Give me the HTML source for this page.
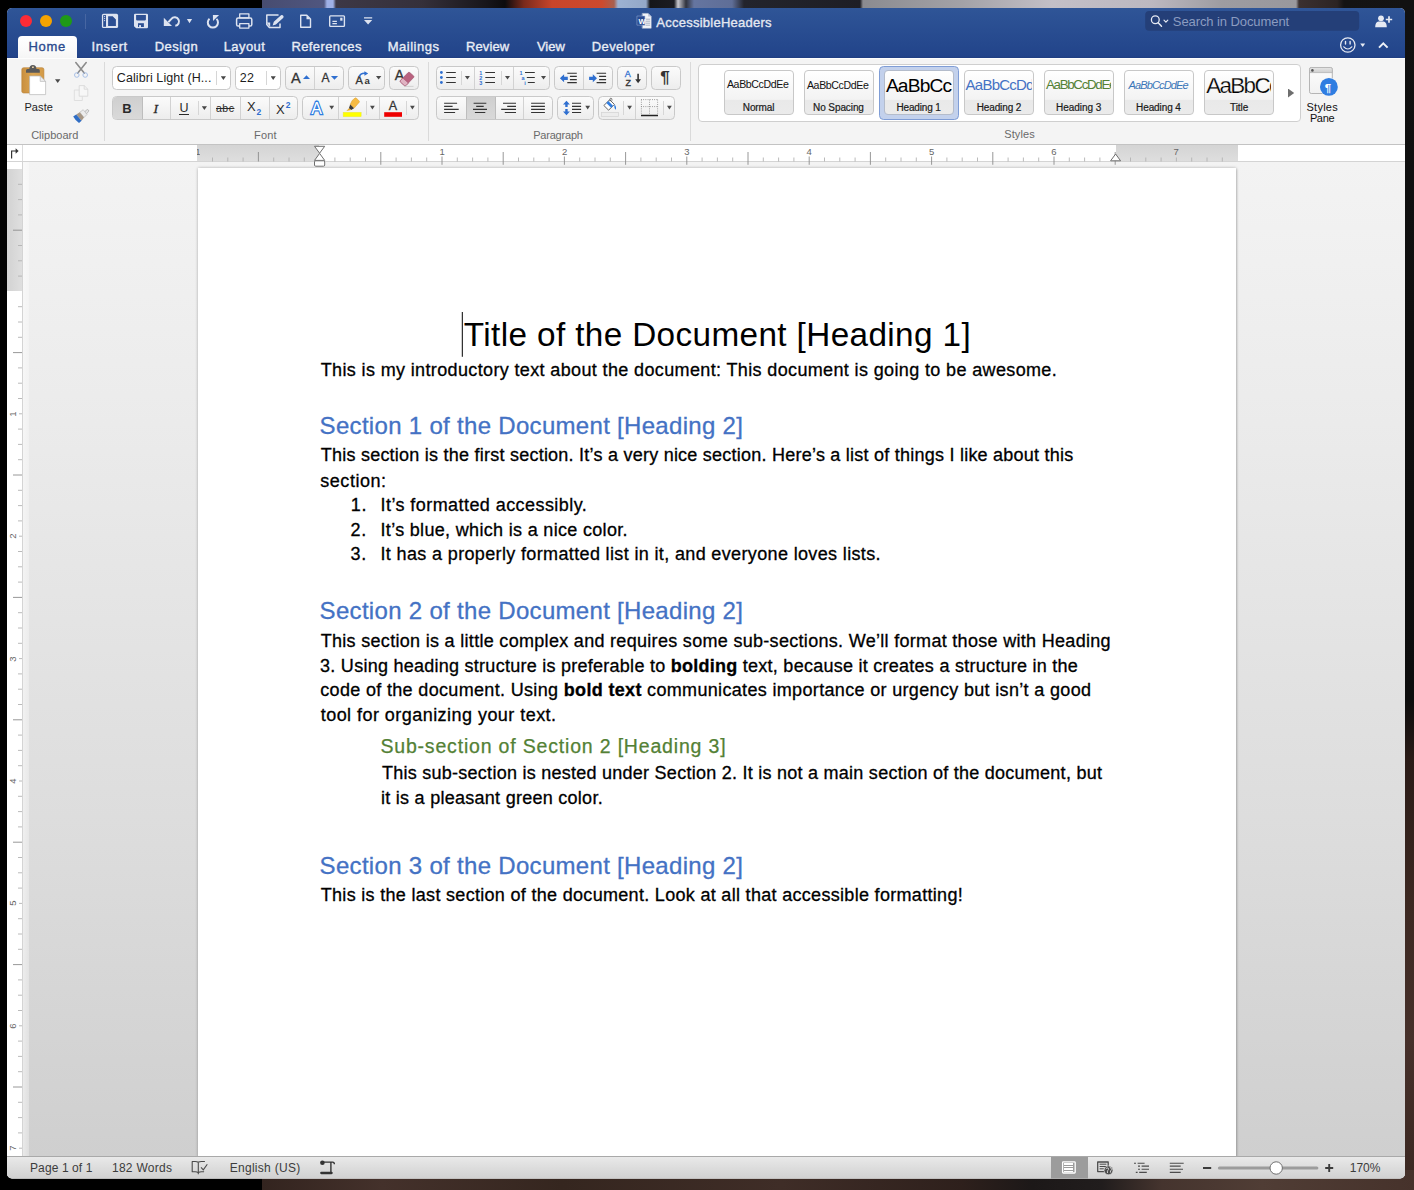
<!DOCTYPE html>
<html lang="en">
<head>
<meta charset="utf-8">
<title>AccessibleHeaders</title>
<style>
*{box-sizing:border-box;margin:0;padding:0}
html,body{width:1414px;height:1190px;overflow:hidden;background:#000}
body{position:relative;font-family:"Liberation Sans",sans-serif;color:#222}
.a{position:absolute}
.f{position:absolute;white-space:nowrap;line-height:1;display:block}
svg{position:absolute;overflow:visible}
#win{left:0;top:0;width:1414px;height:1190px;clip-path:inset(8px 9px 11.5px 7px round 5px);background:#f4f4f4}
#tb{left:0;top:8px;width:1414px;height:50px;background:linear-gradient(#2f5597,#22448a 96%,#1f3d7f)}
.tab{color:#e9edf5;font-size:13px;-webkit-text-stroke:0.35px #e9edf5}
.ui{font-size:11px;color:#1e1e1e}
.grp{font-size:11px;color:#6a6a6a}
.btn{position:absolute;border:1px solid #c9c9c9;border-radius:4.5px;background:linear-gradient(#fbfbfb,#ededed);overflow:hidden}
.btn i{position:absolute;top:0;bottom:0;width:1px;background:#d2d2d2}
.btn i.s{top:4px;bottom:4px;background:#d6d6d6}
.btn b.p{position:absolute;top:0;bottom:0;background:linear-gradient(#cfcfcf,#d9d9d9);border-left:1px solid #bdbdbd;border-right:1px solid #bdbdbd}
.sep{position:absolute;top:62px;height:79px;width:1px;background:#dadada}
.dd{position:absolute;width:5.200px;height:3.800px;background:#464646;clip-path:polygon(0 0,100% 0,50% 100%)}
.tile{position:absolute;top:69.5px;width:69.5px;height:45px;border:1px solid #c8c8c8;border-radius:4px;background:linear-gradient(#fff,#f3f3f3 66%,#e9e9e9 68%,#ebebeb);overflow:hidden}
.tile .f{font-size:10px;color:#222}
.doc{color:#000}
</style>
</head>
<body>
<!-- desktop wallpaper slivers -->
<div class="a" style="left:262px;top:0;width:1152px;height:12px;background:linear-gradient(90deg,#474c70 0,#50567f 62px,#9fb0e6 65px,#9fb0e6 71px,#3d3846 74px,#35303a 160px,#17151a 225px,#0c0b0d 243px,#7a2a1c 262px,#c8452b 290px,#cc4a2e 340px,#a8604f 352px,#9db2d2 356px,#93a8c8 384px,#15161a 388px,#1b1c22 412px,#c9c9cf 416px,#30333d 424px,#6575a0 432px,#5f6e97 470px,#23242c 482px,#1e1e25 598px,#8b8b90 601px,#a3a2a7 700px,#c3bfc7 790px,#bcb8c0 890px,#9d9ca1 960px,#99989d 1034px,#3b3030 1037px,#2c2424 1075px,#141313 1082px,#151414 1152px)"></div>
<div class="a" style="left:1400px;top:0;width:14px;height:1190px;background:linear-gradient(#111 0,#0d0d0d 700px,#2a1b17 760px,#3c2821 900px,#46302a 1040px,#3a2721 1190px)"></div>
<div class="a" style="left:262px;top:1170px;width:1152px;height:20px;background:linear-gradient(90deg,#33241f 0,#44312b 120px,#35261f 300px,#3f2d27 520px,#2e201c 700px,#1c1818 770px,#211d1d 840px,#45342e 900px,#503d35 1000px,#46322b 1152px)"></div>
<div id="win" class="a">
<div id="tb" class="a"></div>
<!-- traffic lights -->
<div class="a" style="left:20.2px;top:15.2px;width:12px;height:12px;border-radius:50%;background:#fc2b36"></div>
<div class="a" style="left:40.1px;top:15.2px;width:12px;height:12px;border-radius:50%;background:#f5a300"></div>
<div class="a" style="left:60.1px;top:15.2px;width:12px;height:12px;border-radius:50%;background:#1f9a17"></div>
<div class="a" style="left:85px;top:14px;width:1px;height:15px;background:#4766a2"></div>
<!-- quick access toolbar + title-bar icons -->
<svg class="a" style="left:0;top:0" width="1414" height="60" viewBox="0 0 1414 60" fill="none" stroke="#dde3f0" stroke-width="1.4" stroke-linejoin="round" stroke-linecap="round">
 <!-- sidebar/doc -->
 <rect x="101.900" y="13.800" width="16.200" height="14.200" rx="1.600" fill="#dde3f0" stroke="none"/>
 <rect x="103.200" y="15.100" width="2.800" height="11.700" fill="#2c4f93" stroke="none"/>
 <path d="M108.100 16.200h4.500l3.300 3.300v6.400h-7.800z" fill="#2c4f93" stroke="none"/>
 <path d="M112.400 16.400v3.300h3.300" stroke="#2c4f93" stroke-width=".1"/>
 <path d="M112.900 17.200v2.100h2.100z" fill="#2c4f93" stroke="none"/>
 <g fill="#dde3f0" stroke="none"><circle cx="104.600" cy="16.600" r=".65"/><circle cx="104.600" cy="18.600" r=".65"/><circle cx="104.600" cy="20.600" r=".65"/></g>
 <!-- save -->
 <path d="M135.200 13.800h11.600q1.200 0 1.200 1.200v12q0 1.200-1.200 1.200h-10.600l-2.200-2v-11.200q0-1.200 1.200-1.200z" fill="#dde3f0" stroke="none"/>
 <path d="M136.100 15.100h9.800v4.500q0 .8-.8 .8h-8.200q-.8 0-.8-.8z" fill="#2c4f93" stroke="none"/>
 <rect x="138" y="23.200" width="5.900" height="3.800" fill="#2c4f93" stroke="none"/>
 <rect x="139.100" y="25.100" width="1.900" height="1.900" fill="#dde3f0" stroke="none"/>
 <!-- undo -->
 <path d="M163.800 17.800v8.300h8.200z" fill="#dde3f0" stroke="none"/>
 <path d="M168.400 22.200L171.400 18.800A4.300 4.300 0 1 1 175.300 25.800" stroke-width="2" stroke-linecap="butt" stroke-linejoin="round"/>
 <path d="M186.900 19.100h5.200l-2.600 4.100z" fill="#dde3f0" stroke="none"/>
 <!-- redo/repeat -->
 <path d="M209.500 18.700A5.100 5.100 0 1 0 216.500 18.900" stroke-width="2" stroke-linecap="butt"/>
 <path d="M212.900 15h6.200l-6.100 6z" fill="#dde3f0" stroke="none"/>
 <!-- print -->
 <rect x="239.700" y="13.800" width="9.200" height="4" stroke-width="1.300"/>
 <rect x="236.600" y="17.900" width="15.200" height="8.200" rx="1.600" stroke-width="1.500"/>
 <rect x="239.700" y="23.600" width="9.200" height="4.500" fill="#2c4f93" stroke-width="1.300"/>
 <!-- edit -->
 <path d="M278 15.100h-11.200v9.400l2.600 3h10.600v-3.400" stroke-width="1.500"/>
 <path d="M266.800 22.500h3.400v4.800z" fill="#dde3f0" stroke="none"/>
 <path d="M272.600 25.600l1.200-3.800l7.200-6.600q1.700-.5 2.400 .9q.6 1.100-.3 2l-7.200 6.500z" fill="#dde3f0" stroke="none"/>
 <!-- new doc -->
 <path d="M300.700 15.300h6.100l3.700 3.700v8.300h-9.800z" stroke-width="1.400"/>
 <path d="M306.500 15.300v4h4z" fill="#dde3f0" stroke="none"/>
 <!-- card -->
 <rect x="329.700" y="15.900" width="14.700" height="10.500" rx=".8" stroke-width="1.400"/>
 <rect x="340.200" y="17.700" width="2.300" height="3" fill="#dde3f0" stroke="none"/>
 <path d="M332.400 21.400h4.500M332.400 23.600h4.500" stroke-width="1.100" stroke-linecap="butt"/>
 <!-- customize -->
 <path d="M364 17.800h8.200" stroke-width="1.300" stroke-linecap="butt"/>
 <path d="M364 20h8.200l-4.100 4.500z" fill="#dde3f0" stroke="none"/>
 <!-- word doc icon -->
 <path d="M642.500 13.400h5.700l3 3v11.800h-8.700z" fill="#f2f4f8" stroke="#c9d0de" stroke-width=".5"/>
 <path d="M648.200 13.400v3h3z" fill="#b9c2d6" stroke="none"/>
 <path d="M645.500 19.200h4.600M645.500 21.200h4.600M645.500 23.200h4.600M645.500 25.200h4.600" stroke="#8d97ad" stroke-width=".7" stroke-linecap="butt"/>
 <rect x="637.300" y="16" width="7.600" height="9.200" fill="#2a4c92" stroke="#9db0d8" stroke-width=".5"/>
 <!-- search box -->
 <rect x="1145.200" y="11" width="214" height="19.800" rx="4" fill="#243f78" stroke="none"/>
 <circle cx="1155.300" cy="19.800" r="3.900" stroke="#e6eaf3" stroke-width="1.300"/>
 <path d="M1158.200 22.800l3.300 3.400" stroke="#e6eaf3" stroke-width="1.500"/>
 <path d="M1164 20.200l1.900 1.900l1.900-1.900" stroke="#e6eaf3" stroke-width="1.200"/>
 <!-- share (person +) -->
 <circle cx="1381" cy="18.300" r="2.900" fill="#e6eaf3" stroke="none"/>
 <path d="M1375.200 27.300q0-5 3.300-5.700h5q3.300 .7 3.300 5.700z" fill="#e6eaf3" stroke="none"/>
 <path d="M1389 16.300v6.400M1385.800 19.500h6.400" stroke="#e6eaf3" stroke-width="1.700" stroke-linecap="butt"/>
 <!-- smiley -->
 <circle cx="1347.800" cy="45" r="7.200" stroke="#e6eaf3" stroke-width="1.300"/>
 <path d="M1343.800 46.800q4 4.400 8 0" stroke="#e6eaf3" stroke-width="1.200"/>
 <path d="M1345.500 41.500v2.600M1350.100 41.500v2.600" stroke="#e6eaf3" stroke-width="1.400"/>
 <path d="M1360.200 43.400h5l-2.500 3.600z" fill="#e6eaf3" stroke="none"/>
 <path d="M1379 47.600l4.300-4.300l4.300 4.300" stroke="#eef1f7" stroke-width="2" stroke-linejoin="miter" stroke-linecap="butt"/>
</svg>
<span class="f" style="left:638.38px;top:18.00px;letter-spacing:-1.294px;font-size:7.500px;font-weight:bold;color:#fff;">W</span>
<span class="f tab" style="left:656.30px;top:15.80px;letter-spacing:0.253px;color:#e4e8f1;-webkit-text-stroke:0.35px #e4e8f1;">AccessibleHeaders</span>
<span class="f" style="left:1172.84px;top:15.20px;letter-spacing:-0.087px;font-size:13px;color:#8b9cc0;">Search in Document</span>
<!-- ribbon tabs -->
<div class="a" style="left:18px;top:36px;width:59px;height:24px;border-radius:4px 4px 0 0;background:linear-gradient(#fff,#fafafa 60%,#f4f4f4)"></div>
<span class="f tab" style="left:28.44px;top:39.80px;letter-spacing:0.746px;color:#2b4a8e;-webkit-text-stroke:0.35px #2b4a8e;">Home</span>
<span class="f tab" style="left:91.44px;top:39.80px;letter-spacing:0.654px;">Insert</span>
<span class="f tab" style="left:154.75px;top:39.80px;letter-spacing:0.481px;">Design</span>
<span class="f tab" style="left:223.67px;top:39.80px;letter-spacing:0.427px;">Layout</span>
<span class="f tab" style="left:291.41px;top:39.80px;letter-spacing:0.395px;">References</span>
<span class="f tab" style="left:387.77px;top:39.80px;letter-spacing:0.497px;">Mailings</span>
<span class="f tab" style="left:465.94px;top:39.80px;letter-spacing:0.125px;">Review</span>
<span class="f tab" style="left:536.91px;top:39.80px;letter-spacing:-0.018px;">View</span>
<span class="f tab" style="left:591.76px;top:39.80px;letter-spacing:0.404px;">Developer</span>
<div class="a" style="left:0;top:58px;width:1414px;height:1px;background:#fdfdfd"></div>
<!-- ===== ribbon ===== -->
<div class="a" style="left:0;top:144px;width:1414px;height:1px;background:#c3c3c3"></div>
<div class="sep" style="left:103.500px"></div>
<div class="sep" style="left:427.500px"></div>
<div class="sep" style="left:689.800px"></div>
<!-- clipboard -->
<svg class="a" style="left:0;top:58px" width="110" height="86" viewBox="0 58 110 86">
 <defs><linearGradient id="gcb" x1="0" y1="0" x2="1" y2="0"><stop offset="0" stop-color="#c98f3f"/><stop offset=".5" stop-color="#dba551"/><stop offset="1" stop-color="#d39a47"/></linearGradient></defs>
 <rect x="21.800" y="67.700" width="22.100" height="25.300" rx="1.800" fill="url(#gcb)" stroke="#b98236" stroke-width=".6"/>
 <path d="M26 72.800v-2.200q0-1.500 1.500-1.500h1.800q.2-4.100 3.600-4.100t3.600 4.100h1.800q1.500 0 1.500 1.500v2.200z" fill="#595959"/>
 <rect x="32" y="66.500" width="1.800" height="1.500" fill="#e6cfa6"/>
 <path d="M29.600 76h10.600l5.400 5.400v13.200h-16z" fill="#fff" stroke="#b9b9b9" stroke-width=".7"/>
 <path d="M40.200 76v5.400h5.400z" fill="#eee" stroke="#b9b9b9" stroke-width=".7" stroke-linejoin="round"/>
 <path d="M55 79.200h5.400l-2.700 3.800z" fill="#4a4a4a"/>
 <!-- scissors -->
 <path d="M75.800 62.600L84.400 73.200M86.200 62.600L77.600 73.200" stroke="#8c8c8c" stroke-width="1.600" fill="none" stroke-linecap="round"/>
 <circle cx="76.800" cy="75" r="2.300" fill="none" stroke="#a9c1e8" stroke-width="1"/>
 <circle cx="85.200" cy="75" r="2.300" fill="none" stroke="#a9c1e8" stroke-width="1"/>
 <!-- copy (disabled) -->
 <path d="M79.200 85.600h5l3.600 3.600v7h-8.600z" fill="#f7f7f7" stroke="#d9d9d9" stroke-width=".9"/>
 <path d="M84.200 85.600v3.600h3.600" fill="none" stroke="#d9d9d9" stroke-width=".9"/>
 <path d="M79.200 90h-4.900v10.500h8v-4.300" fill="none" stroke="#dcdcdc" stroke-width=".9"/>
 <!-- format painter -->
 <path d="M84.200 112.500l2.300-2.600q1.100-.8 1.900 .1q.7 .9-.1 1.800l-2.300 2.500z" fill="#e3e3e3" stroke="#9c9c9c" stroke-width=".6"/>
 <path d="M79.800 112.300l3.400-2.600l3.800 4.800l-3 3z" fill="#ececec" stroke="#a8a8a8" stroke-width=".5"/>
 <path d="M76.200 114.600l3.600-2.300l4.200 5.200l-2.400 3.200z" fill="#a89886"/>
 <path d="M73.200 116.500l3-1.900l5.400 6.100l-2.600 2.300q-3.500-2.300-5.800-6.500z" fill="#2f6dc4"/>
</svg>
<span class="f ui" style="left:24.43px;top:101.90px;letter-spacing:0.110px;">Paste</span>
<span class="f grp" style="left:31.18px;top:129.50px;letter-spacing:0.006px;">Clipboard</span>
<span class="f grp" style="left:254.11px;top:129.50px;letter-spacing:0.137px;">Font</span>
<span class="f grp" style="left:533.15px;top:129.50px;letter-spacing:-0.191px;">Paragraph</span>
<span class="f grp" style="left:1004.21px;top:129.40px;letter-spacing:0.101px;">Styles</span>
<!-- font row 1 -->
<div class="btn" style="left:112.100px;top:66.400px;width:118.500px;height:23.300px;background:#fff"><i class="s" style="left:103.200px"></i></div>
<div class="btn" style="left:235.100px;top:66.400px;width:45.600px;height:23.300px;background:#fff"><i class="s" style="left:30.100px"></i></div>
<span class="f" style="left:116.83px;top:71.90px;letter-spacing:0.080px;font-size:12.5px;color:#1c1c1c;">Calibri Light (H...</span>
<span class="f" style="left:239.76px;top:71.90px;letter-spacing:0.310px;font-size:12.5px;color:#1c1c1c;">22</span>
<div class="dd" style="left:220.800px;top:76.200px"></div>
<div class="dd" style="left:270.600px;top:76.200px"></div>
<div class="btn" style="left:285.100px;top:66.400px;width:58.800px;height:23.300px"><i style="left:28.200px"></i></div>
<div class="btn" style="left:348.200px;top:66.400px;width:36.500px;height:23.300px"></div>
<div class="btn" style="left:389px;top:66.400px;width:29.800px;height:23.300px"></div>
<!-- font row 2 -->
<div class="btn" style="left:112.100px;top:96.400px;width:185.500px;height:23.300px"><b class="p" style="left:-1px;width:31px;border-left:0"></b><i style="left:57.400px"></i><i class="s" style="left:85.300px"></i><i style="left:97.300px"></i><i style="left:126.600px"></i><i style="left:155.600px"></i></div>
<div class="btn" style="left:302.300px;top:96.400px;width:116.500px;height:23.300px"><i style="left:34.800px"></i><i class="s" style="left:63.200px"></i><i style="left:75.400px"></i><i class="s" style="left:102.900px"></i></div>
<!-- paragraph row 1 -->
<div class="btn" style="left:436.100px;top:66.400px;width:113.500px;height:23.300px"><i class="s" style="left:24.300px"></i><i style="left:36.500px"></i><i class="s" style="left:64.100px"></i><i style="left:76.200px"></i></div>
<div class="btn" style="left:554.200px;top:66.400px;width:58.500px;height:23.300px"><i style="left:28.200px"></i></div>
<div class="btn" style="left:617.100px;top:66.400px;width:29.700px;height:23.300px"></div>
<div class="btn" style="left:651.100px;top:66.400px;width:29.700px;height:23.300px"></div>
<!-- paragraph row 2 -->
<div class="btn" style="left:436.100px;top:96.400px;width:116.500px;height:23.300px"><b class="p" style="left:28.500px;width:30.200px"></b><i style="left:86.300px"></i></div>
<div class="btn" style="left:557.200px;top:96.400px;width:36.400px;height:23.300px"></div>
<div class="btn" style="left:598.300px;top:96.400px;width:77.200px;height:23.300px"><i class="s" style="left:24.200px"></i><i style="left:36.200px"></i><i class="s" style="left:64px"></i></div>
<!-- font / paragraph glyph icons -->
<span class="f" style="left:122.26px;top:101.60px;letter-spacing:-0.891px;font-size:13px;font-weight:bold;color:#2a2a2a;">B</span>
<span class="f" style="left:153.56px;top:101.60px;letter-spacing:2.300px;font-size:13.5px;font-style:italic;font-family:'Liberation Serif',serif;color:#2a2a2a;-webkit-text-stroke:.3px #2a2a2a;">I</span>
<span class="f" style="left:179.38px;top:102.30px;letter-spacing:-0.431px;font-size:12.5px;color:#2a2a2a;">U</span>
<div class="a" style="left:179.200px;top:114px;width:9.600px;height:1.100px;background:#2a2a2a"></div>
<div class="dd" style="left:201.800px;top:106.200px"></div>
<span class="f" style="left:216.00px;top:103.30px;letter-spacing:0.499px;font-size:10.500px;color:#2a2a2a;text-decoration:line-through;">abc</span>
<span class="f" style="left:247.04px;top:100.30px;letter-spacing:-0.172px;font-size:13px;color:#2a2a2a;">X</span>
<span class="f" style="left:256.62px;top:107.60px;letter-spacing:-0.234px;font-size:8.500px;font-weight:bold;color:#2f6fd0;">2</span>
<span class="f" style="left:276.04px;top:102.60px;letter-spacing:-0.172px;font-size:13px;color:#2a2a2a;">X</span>
<span class="f" style="left:285.63px;top:101.30px;letter-spacing:-0.234px;font-size:8.500px;font-weight:bold;color:#2f6fd0;">2</span>
<span class="f" style="left:290.99px;top:70.80px;letter-spacing:0.928px;font-size:14.500px;color:#333;-webkit-text-stroke:.3px #333;">A</span>
<span class="f" style="left:321.48px;top:72.00px;letter-spacing:0.684px;font-size:12px;color:#333;-webkit-text-stroke:.3px #333;">A</span>
<span class="f" style="left:355.45px;top:74.90px;letter-spacing:1.856px;font-size:11px;color:#333;-webkit-text-stroke:.3px #333;">A</span>
<span class="f" style="left:364.60px;top:75.90px;letter-spacing:0.003px;font-size:9.500px;font-weight:bold;color:#333;">a</span>
<span class="f" style="left:394.69px;top:67.60px;letter-spacing:0.256px;font-size:14px;color:#333;-webkit-text-stroke:.3px #333;">A</span>
<span class="f" style="left:311.36px;top:100.60px;letter-spacing:1.528px;font-size:16px;color:#fff;-webkit-text-stroke:2.400px #2f7de1;paint-order:stroke fill;">A</span>
<span class="f" style="left:388.82px;top:99.90px;letter-spacing:2.256px;font-size:12.500px;color:#333;-webkit-text-stroke:.3px #333;">A</span>
<span class="f" style="left:624.73px;top:69.80px;letter-spacing:-0.216px;font-size:9px;color:#2f6fd0;-webkit-text-stroke:.3px #2f6fd0;">A</span>
<span class="f" style="left:625.38px;top:78.80px;letter-spacing:-0.500px;font-size:9px;color:#333;-webkit-text-stroke:.3px #333;">Z</span>
<span class="f" style="left:660.16px;top:68.50px;letter-spacing:1.831px;font-size:17px;color:#333;font-weight:bold;">¶</span>
<svg class="a" style="left:0;top:58px" width="700" height="70" viewBox="0 58 700 70" fill="none">
 <!-- grow/shrink -->
 <path d="M303 79.100h7l-3.500-3.900z" fill="#2f6fd0"/>
 <path d="M330.900 75.900h7.200l-3.600 3.900z" fill="#2f6fd0"/>
 <!-- change case arrow -->
 <path d="M359.200 76.800q1.200-4 6-3.600" stroke="#2f6fd0" stroke-width="1.500"/>
 <path d="M364.400 71.200l3.800 2.300l-3.800 2.300z" fill="#2f6fd0"/>
 <path d="M376 75.900h5.300l-2.650 3.700z" fill="#4a4a4a"/>
 <!-- eraser -->
 <path d="M400.500 80.400l7.600-7.800q.8-.7 1.700 0l3.800 3.300q.7 .8 0 1.600l-7.600 8q-.8 .8-1.700 0l-3.800-3.400q-.7-.8 0-1.700z" fill="#b9627f" stroke="#9c4f6a" stroke-width=".6"/>
 <path d="M400.500 80.400l2.300-2.400l5.500 5l-2.300 2.500q-.8 .8-1.700 0l-3.800-3.400q-.7-.8 0-1.700z" fill="#e0b3c2" stroke="#9c4f6a" stroke-width=".5"/>
 <path d="M404 86.400h9.500" stroke="#c9c9c9" stroke-width=".8"/>
 <!-- text effects dd -->
 <path d="M329.300 105.800h4.800l-2.400 3.800z" fill="#4a4a4a"/>
 <!-- highlighter -->
 <path d="M352.200 100.400l2.800-2.300q.7-.5 1.400 .1l2.800 2.800q.5 .7 0 1.300l-5.200 6l-3.800-3.700z" fill="#f6bb43" stroke="#d79a22" stroke-width=".5"/>
 <path d="M350.200 104.600l3.800 3.700l-2.800 1.800l-2.300-1.800z" fill="#3a3a3a"/>
 <path d="M348.900 108.300l2.300 1.800l-4.800 .9z" fill="#e5a92f"/>
 <rect x="343.100" y="112.200" width="18.100" height="4.600" fill="#ffff00" stroke="#e3e35a" stroke-width=".4"/>
 <path d="M370 105.800h4.800l-2.400 3.800z" fill="#4a4a4a"/>
 <rect x="384.200" y="112.200" width="17.800" height="4.600" fill="#ee0000"/>
 <path d="M410 105.800h4.800l-2.400 3.800z" fill="#4a4a4a"/>
 <!-- bullets -->
 <g fill="#2f6fd0"><circle cx="441.400" cy="72.500" r="1.400"/><circle cx="441.400" cy="77.500" r="1.400"/><circle cx="441.400" cy="82.500" r="1.400"/></g>
 <path d="M446.200 72.500h9.600M446.200 77.500h9.600M446.200 82.500h9.600" stroke="#333" stroke-width="1.100"/>
 <path d="M464.900 75.900h5l-2.500 3.700z" fill="#4a4a4a"/>
 <!-- numbering -->
 <path d="M485.300 72.500h9.700M485.300 77.500h9.700M485.300 82.500h9.700" stroke="#333" stroke-width="1.100"/>
 <path d="M505 75.900h5l-2.500 3.700z" fill="#4a4a4a"/>
 <!-- multilevel -->
 <path d="M525 72.500h9.800M526.800 77.500h8M527.800 82.500h7" stroke="#333" stroke-width="1.100"/>
 <path d="M541 75.900h5l-2.500 3.700z" fill="#4a4a4a"/>
 <!-- decrease indent -->
 <path d="M559.900 78.300l4.200-4v2.400h3.700v3.200h-3.700v2.400z" fill="#2f6fd0"/>
 <path d="M567.300 73.300h9.500M569.900 76.400h6.900M569.900 79.600h6.900M567.300 82.600h9.500" stroke="#333" stroke-width="1.100"/>
 <!-- increase indent -->
 <path d="M597 78.300l-4.200-4v2.400h-3.700v3.200h3.700v2.400z" fill="#2f6fd0"/>
 <path d="M596.600 73.300h9.500M599.100 76.400h7M599.100 79.600h7M596.600 82.600h9.500" stroke="#333" stroke-width="1.100"/>
 <!-- sort arrow -->
 <path d="M638.100 73.800v6.200" stroke="#333" stroke-width="1.600"/>
 <path d="M635.200 79.300h5.800l-2.900 4z" fill="#333"/>
 <!-- align left -->
 <path d="M444.100 103.300h13M444.100 106.400h8.500M444.100 109.400h14.600M444.100 112.500h11" stroke="#333" stroke-width="1.100"/>
 <path d="M473.600 103.300h12.700M476.200 106.400h7.500M473 109.400h14M474.900 112.500h10.400" stroke="#333" stroke-width="1.100"/>
 <path d="M503 103.300h13M507.200 106.400h8.800M501.200 109.400h14.800M504.800 112.500h11.200" stroke="#333" stroke-width="1.100"/>
 <path d="M531.100 103.300h13.800M531.100 106.400h13.800M531.100 109.400h13.800M531.100 112.500h13.800" stroke="#333" stroke-width="1.100"/>
 <!-- line spacing -->
 <path d="M566.450 100.800l3.450 3.800h-2.250v2.400h-2.400v-2.400h-2.250zM566.450 115.200l3.450-3.800h-2.250v-2.400h-2.400v2.400h-2.250z" fill="#2f6fd0"/>
 <path d="M572 103.300h9.100M572 106.400h9.100M572 109.400h9.100M572 112.500h9.100" stroke="#333" stroke-width="1.100"/>
 <path d="M585.300 105.800h4.800l-2.400 3.800z" fill="#4a4a4a"/>
 <!-- shading bucket -->
 <path d="M603.900 105.500l5.800-5.800l4.700 4.700l-5.800 5.800z" fill="#fff" stroke="#555" stroke-width=".9" stroke-linejoin="round"/>
 <path d="M606.400 103l1.900-1.900l4.700 4.700l-1.900 1.900z" fill="#2f7de1"/>
 <path d="M609.900 101.300v-1.800q0-1.300 1-1.300t1 1.300v1.200" stroke="#555" stroke-width=".8"/>
 <path d="M614.400 104.400q2.300 1.800 1.400 5.400q-1.900-1.400-1.400-5.400z" fill="#2f7de1"/>
 <rect x="601.500" y="112.500" width="17" height="4" fill="#ececec" stroke="#d2d2d2" stroke-width=".7"/>
 <path d="M627.200 105.800h4.800l-2.400 3.800z" fill="#4a4a4a"/>
 <!-- borders -->
 <path d="M641 99.600h17M641 106.600h17M641.400 99.600v14M649.500 99.600v14M657.600 99.600v14" stroke="#8a8a8a" stroke-width=".9" stroke-dasharray=".9 1.300"/>
 <path d="M641 115.500h17" stroke="#222" stroke-width="1.300"/>
 <path d="M667 105.800h4.800l-2.400 3.800z" fill="#4a4a4a"/>
</svg>
<!-- numbering digits (real text) -->
<span class="f" style="left:479.28px;top:70.80px;letter-spacing:-0.263px;font-size:5.500px;font-weight:bold;color:#2f6fd0;">1</span>
<span class="f" style="left:479.37px;top:75.80px;letter-spacing:-0.263px;font-size:5.500px;font-weight:bold;color:#2f6fd0;">2</span>
<span class="f" style="left:479.33px;top:80.80px;letter-spacing:-0.263px;font-size:5.500px;font-weight:bold;color:#2f6fd0;">3</span>
<span class="f" style="left:519.57px;top:70.80px;letter-spacing:-0.462px;font-size:5.500px;font-weight:bold;color:#2f6fd0;">1</span>
<span class="f" style="left:521.55px;top:75.60px;letter-spacing:-0.263px;font-size:5.500px;font-weight:bold;color:#2f6fd0;">a</span>
<span class="f" style="left:524.27px;top:80.80px;letter-spacing:0.869px;font-size:5.500px;font-weight:bold;color:#2f6fd0;">i</span>
<!-- styles gallery -->
<div class="a" style="left:697.500px;top:64px;width:603.200px;height:58px;border:1px solid #cfcfcf;border-radius:4px;background:#fff"></div>
<div class="a" style="left:879.300px;top:66.400px;width:79.400px;height:53.200px;border:1.200px solid #7f9dd6;border-radius:4.500px;background:#c3d1ec"></div>
<div class="tile" style="left:724.300px"></div>
<div class="tile" style="left:804.200px"></div>
<div class="tile" style="left:884.300px;border-color:#b4bccb"></div>
<div class="tile" style="left:964.200px"></div>
<div class="tile" style="left:1044.100px"></div>
<div class="tile" style="left:1124.200px"></div>
<div class="tile" style="left:1204.300px"></div>
<span class="f" style="left:726.95px;top:79.20px;letter-spacing:-0.384px;font-size:10.600px;color:#111;">AaBbCcDdEe</span>
<span class="f" style="left:806.95px;top:80.00px;letter-spacing:-0.383px;font-size:10.600px;color:#111;">AaBbCcDdEe</span>
<div class="a" style="left:885.300px;top:72px;width:67.400px;height:27px;overflow:hidden"><span class="f" style="left:0.58px;top:3.70px;letter-spacing:-0.820px;font-size:19.200px;color:#000;">AaBbCc</span></div>
<div class="a" style="left:965.200px;top:72px;width:66.400px;height:27px;overflow:hidden"><span class="f" style="left:0.42px;top:5.30px;letter-spacing:-0.762px;font-size:15px;color:#4472c4;">AaBbCcDd</span></div>
<div class="a" style="left:1045.100px;top:72px;width:66.200px;height:27px;overflow:hidden"><span class="f" style="left:0.88px;top:6.40px;letter-spacing:-1.288px;font-size:13.300px;color:#538135;">AaBbCcDdEe</span></div>
<span class="f" style="left:1128.40px;top:79.90px;letter-spacing:-0.851px;font-size:11px;font-style:italic;color:#3a76b8;">AaBbCcDdEe</span>
<div class="a" style="left:1205.300px;top:72px;width:65.800px;height:27px;overflow:hidden"><span class="f" style="left:0.94px;top:2.50px;letter-spacing:-1.645px;font-size:22.400px;color:#000;-webkit-text-stroke:.25px #fafafa;">AaBbCc</span></div>
<span class="f" style="left:742.78px;top:102.60px;letter-spacing:-0.096px;font-size:10px;color:#1a1a1a;-webkit-text-stroke:.2px #1a1a1a;">Normal</span>
<span class="f" style="left:813.10px;top:102.60px;letter-spacing:-0.096px;font-size:10px;color:#1a1a1a;-webkit-text-stroke:.2px #1a1a1a;">No Spacing</span>
<span class="f" style="left:896.49px;top:102.60px;letter-spacing:-0.166px;font-size:10px;color:#1a1a1a;-webkit-text-stroke:.2px #1a1a1a;">Heading 1</span>
<span class="f" style="left:976.69px;top:102.60px;letter-spacing:-0.120px;font-size:10px;color:#1a1a1a;-webkit-text-stroke:.2px #1a1a1a;">Heading 2</span>
<span class="f" style="left:1055.99px;top:102.60px;letter-spacing:-0.026px;font-size:10px;color:#1a1a1a;-webkit-text-stroke:.2px #1a1a1a;">Heading 3</span>
<span class="f" style="left:1136.07px;top:102.60px;letter-spacing:-0.097px;font-size:10px;color:#1a1a1a;-webkit-text-stroke:.2px #1a1a1a;">Heading 4</span>
<span class="f" style="left:1229.97px;top:102.60px;letter-spacing:-0.050px;font-size:10px;color:#1a1a1a;-webkit-text-stroke:.2px #1a1a1a;">Title</span>
<div class="a" style="left:1288px;top:88.600px;width:6.200px;height:9px;background:#6e6e6e;clip-path:polygon(0 0,100% 50%,0 100%)"></div>
<!-- styles pane -->
<svg class="a" style="left:1300px;top:60px" width="50" height="40" viewBox="1300 60 50 40">
 <defs><linearGradient id="gsp" x1="0" y1="0" x2="0" y2="1"><stop offset="0" stop-color="#fdfdfd"/><stop offset="1" stop-color="#f1f1f1"/></linearGradient>
 <linearGradient id="gsp2" x1="0" y1="0" x2="0" y2="1"><stop offset="0" stop-color="#e6e6e6"/><stop offset="1" stop-color="#cfcfcf"/></linearGradient></defs>
 <rect x="1309.500" y="67.500" width="22.800" height="26" rx="1.800" fill="url(#gsp)" stroke="#aeaeae" stroke-width=".9"/>
 <path d="M1309.500 72.600h22.800v-3.300q0-1.800-1.800-1.800h-19.200q-1.800 0-1.800 1.800z" fill="url(#gsp2)" stroke="#aeaeae" stroke-width=".7"/>
 <circle cx="1312.400" cy="70.400" r="1.300" fill="#555"/>
 <circle cx="1328.900" cy="86.900" r="9.300" fill="#f4f4f4"/>
 <circle cx="1328.900" cy="86.900" r="8.900" fill="#2f7de1"/>
</svg>
<span class="f" style="left:1324.75px;top:82.60px;letter-spacing:-0.206px;font-size:11.500px;font-weight:bold;color:#fff;">¶</span>
<span class="f" style="left:1306.46px;top:101.70px;letter-spacing:0.265px;font-size:11px;color:#111;">Styles</span>
<span class="f" style="left:1309.90px;top:113.30px;letter-spacing:-0.359px;font-size:11px;color:#111;">Pane</span>
<!-- ruler + document area -->
<div class="a" style="left:0;top:145px;width:1414px;height:1045px;background:linear-gradient(#f3f3f3 17px,#ececec 250px,#dcdcdc 700px,#cfcfcf 1012px)"></div>
<div class="a" style="left:0;top:145px;width:1414px;height:16.500px;background:#fff;border-bottom:1px solid #d4d4d4"></div>
<div class="a" style="left:197.400px;top:145px;width:121.800px;height:16px;background:linear-gradient(#d4d4d4,#dedede)"></div>
<div class="a" style="left:1115.600px;top:145px;width:122px;height:16px;background:linear-gradient(#d4d4d4,#dedede)"></div>
<div class="a" style="left:7px;top:161.500px;width:15.500px;height:995px;background:#fff;border-right:1px solid #d4d4d4"></div>
<div class="a" style="left:7px;top:169px;width:15px;height:122.300px;background:linear-gradient(90deg,#d2d2d2,#dfdfdf)"></div>
<div class="a" style="left:22px;top:145px;width:1px;height:16px;background:#dcdcdc"></div>
<div class="a" style="left:22.500px;top:162px;width:6.500px;height:995px;background:linear-gradient(90deg,rgba(255,255,255,.55),rgba(255,255,255,.3))"></div>
<div class="a" style="left:197.500px;top:168.300px;width:1038px;height:990px;background:#fff;box-shadow:0 0 3px rgba(0,0,0,.28),1px 1px 2px rgba(0,0,0,.12)"></div>
<svg class="a" style="left:0;top:140px" width="1414" height="1050" viewBox="0 140 1414 1050" fill="none">
 <path d="M212.5 157.500V161.500M227.8 157.500V161.500M243.1 157.500V161.500M273.7 157.500V161.500M289.0 157.500V161.500M304.3 157.500V161.500M334.9 157.500V161.500M350.2 157.500V161.500M365.5 157.500V161.500M396.1 157.500V161.500M411.4 157.500V161.500M426.7 157.500V161.500M457.3 157.500V161.500M472.6 157.500V161.500M487.9 157.500V161.500M518.5 157.500V161.500M533.8 157.500V161.500M549.1 157.500V161.500M579.7 157.500V161.500M595.0 157.500V161.500M610.3 157.500V161.500M640.9 157.500V161.500M656.2 157.500V161.500M671.5 157.500V161.500M702.1 157.500V161.500M717.4 157.500V161.500M732.7 157.500V161.500M763.3 157.500V161.500M778.6 157.500V161.500M793.9 157.500V161.500M824.5 157.500V161.500M839.8 157.500V161.500M855.1 157.500V161.500M885.7 157.500V161.500M901.0 157.500V161.500M916.3 157.500V161.500M946.9 157.500V161.500M962.2 157.500V161.500M977.5 157.500V161.500M1008.1 157.500V161.500M1023.4 157.500V161.500M1038.7 157.500V161.500M1069.3 157.500V161.500M1084.6 157.500V161.500M1099.9 157.500V161.500M1130.5 157.500V161.500M1145.8 157.500V161.500M1161.1 157.500V161.500M1176.4 157.500V161.500M1191.7 157.500V161.500M1207.0 157.500V161.500M1222.3 157.500V161.500" stroke="#b2b2b2" stroke-width=".9"/>
 <path d="M258.4 152V161.500M380.8 152V164.800M442.0 156.500V164.800M503.2 152V164.800M564.4 156.500V164.800M625.6 152V164.800M686.8 156.500V164.800M748.0 152V164.800M809.2 156.500V164.800M870.4 152V164.800M931.6 156.500V164.800M992.8 152V164.800M1054.0 156.500V164.800M1115.2 152V164.800" stroke="#8c8c8c" stroke-width=".9"/>
 <path d="M18 184.3H22M18 199.6H22M18 214.9H22M18 245.5H22M18 260.8H22M18 276.1H22M18 306.7H22M18 322.0H22M18 337.3H22M18 367.9H22M18 383.2H22M18 398.5H22M19 413.8H22M18 429.1H22M18 444.4H22M18 459.7H22M18 490.3H22M18 505.6H22M18 520.9H22M19 536.2H22M18 551.5H22M18 566.8H22M18 582.1H22M18 612.7H22M18 628.0H22M18 643.3H22M19 658.6H22M18 673.9H22M18 689.2H22M18 704.5H22M18 735.1H22M18 750.4H22M18 765.7H22M19 781.0H22M18 796.3H22M18 811.6H22M18 826.9H22M18 857.5H22M18 872.8H22M18 888.1H22M19 903.4H22M18 918.7H22M18 934.0H22M18 949.3H22M18 979.9H22M18 995.2H22M18 1010.5H22M19 1025.8H22M18 1041.1H22M18 1056.4H22M18 1071.7H22M18 1102.3H22M18 1117.6H22M18 1132.9H22M19 1148.2H22" stroke="#b2b2b2" stroke-width=".9"/>
 <path d="M13 230.2H22M13 352.6H22M13 475.0H22M13 597.4H22M13 719.8H22M13 842.2H22M13 964.6H22M13 1087.0H22" stroke="#8c8c8c" stroke-width=".9"/>
 <path d="M314.500 146.300h10.200l-5.100 6.900z" fill="#fff" stroke="#6f6f6f" stroke-width="1" stroke-linejoin="round"/>
 <path d="M314.500 160.400l5.100-7l5.100 7z" fill="#fff" stroke="#6f6f6f" stroke-width="1" stroke-linejoin="round"/>
 <rect x="314.500" y="160.800" width="10.200" height="5.400" rx="1.200" fill="#fff" stroke="#6f6f6f" stroke-width="1"/>
 <path d="M1110.600 160.800l5-6.800l5 6.800z" fill="#fff" stroke="#6f6f6f" stroke-width="1" stroke-linejoin="round"/>
 <path d="M11.600 158.600v-7.600h5" stroke="#333" stroke-width="1.200"/>
 <path d="M15.600 148.300l3 2.700l-3 2.700z" fill="#333"/>
 <path d="M462.300 312v44.800" stroke="#000" stroke-width="1"/>
</svg>
<span class="f" style="left:439.39px;top:146.80px;letter-spacing:-0.097px;font-size:9.500px;color:#666;">1</span>
<span class="f" style="left:561.91px;top:146.80px;letter-spacing:-0.097px;font-size:9.500px;color:#666;">2</span>
<span class="f" style="left:684.28px;top:146.80px;letter-spacing:-0.097px;font-size:9.500px;color:#666;">3</span>
<span class="f" style="left:806.59px;top:146.80px;letter-spacing:-0.097px;font-size:9.500px;color:#666;">4</span>
<span class="f" style="left:928.89px;top:146.80px;letter-spacing:-0.097px;font-size:9.500px;color:#666;">5</span>
<span class="f" style="left:1051.37px;top:146.80px;letter-spacing:-0.097px;font-size:9.500px;color:#666;">6</span>
<span class="f" style="left:1173.62px;top:146.80px;letter-spacing:-0.097px;font-size:9.500px;color:#666;">7</span>
<div class="a" style="left:197.400px;top:146px;width:3px;height:12px;overflow:hidden"><span class="f" style="left:-2.28px;top:0.80px;letter-spacing:-0.097px;font-size:9.500px;color:#666;">1</span></div>
<div class="a" style="left:7px;top:407.8px;width:12px;height:12px"><span style="display:block;transform:rotate(-90deg);font-size:9.500px;line-height:12px;text-align:center;color:#666">1</span></div>
<div class="a" style="left:7px;top:530.2px;width:12px;height:12px"><span style="display:block;transform:rotate(-90deg);font-size:9.500px;line-height:12px;text-align:center;color:#666">2</span></div>
<div class="a" style="left:7px;top:652.6px;width:12px;height:12px"><span style="display:block;transform:rotate(-90deg);font-size:9.500px;line-height:12px;text-align:center;color:#666">3</span></div>
<div class="a" style="left:7px;top:775.0px;width:12px;height:12px"><span style="display:block;transform:rotate(-90deg);font-size:9.500px;line-height:12px;text-align:center;color:#666">4</span></div>
<div class="a" style="left:7px;top:897.4px;width:12px;height:12px"><span style="display:block;transform:rotate(-90deg);font-size:9.500px;line-height:12px;text-align:center;color:#666">5</span></div>
<div class="a" style="left:7px;top:1019.8px;width:12px;height:12px"><span style="display:block;transform:rotate(-90deg);font-size:9.500px;line-height:12px;text-align:center;color:#666">6</span></div>
<div class="a" style="left:7px;top:1142.2px;width:12px;height:12px"><span style="display:block;transform:rotate(-90deg);font-size:9.500px;line-height:12px;text-align:center;color:#666">7</span></div>
<!-- document text -->
<span class="f doc" style="left:463.80px;top:317.90px;letter-spacing:0.378px;font-size:33.300px;">Title of the Document [Heading 1]</span>
<span class="f doc" style="left:320.71px;top:360.60px;letter-spacing:0.365px;font-size:18px;-webkit-text-stroke:.3px #000;">This is my introductory text about the document: This document is going to be awesome.</span>
<span class="f doc" style="left:319.61px;top:414.20px;letter-spacing:0.307px;font-size:24px;color:#4472c4;-webkit-text-stroke:.3px #4472c4;">Section 1 of the Document [Heading 2]</span>
<span class="f doc" style="left:320.71px;top:446.40px;letter-spacing:0.237px;font-size:18px;-webkit-text-stroke:.3px #000;">This section is the first section. It’s a very nice section. Here’s a list of things I like about this</span>
<span class="f doc" style="left:320.25px;top:471.60px;letter-spacing:0.541px;font-size:18px;-webkit-text-stroke:.3px #000;">section:</span>
<span class="f doc" style="left:350.73px;top:496.30px;letter-spacing:0.819px;font-size:18px;-webkit-text-stroke:.3px #000;">1.</span>
<span class="f doc" style="left:380.52px;top:496.30px;letter-spacing:0.433px;font-size:18px;-webkit-text-stroke:.3px #000;">It’s formatted accessibly.</span>
<span class="f doc" style="left:350.62px;top:520.80px;letter-spacing:0.540px;font-size:18px;-webkit-text-stroke:.3px #000;">2.</span>
<span class="f doc" style="left:380.52px;top:520.80px;letter-spacing:0.320px;font-size:18px;-webkit-text-stroke:.3px #000;">It’s blue, which is a nice color.</span>
<span class="f doc" style="left:350.60px;top:545.20px;letter-spacing:0.557px;font-size:18px;-webkit-text-stroke:.3px #000;">3.</span>
<span class="f doc" style="left:380.52px;top:545.20px;letter-spacing:0.357px;font-size:18px;-webkit-text-stroke:.3px #000;">It has a properly formatted list in it, and everyone loves lists.</span>
<span class="f doc" style="left:319.61px;top:599.40px;letter-spacing:0.307px;font-size:24px;color:#4472c4;-webkit-text-stroke:.3px #4472c4;">Section 2 of the Document [Heading 2]</span>
<span class="f doc" style="left:320.71px;top:631.60px;letter-spacing:0.304px;font-size:18px;-webkit-text-stroke:.3px #000;">This section is a little complex and requires some sub-sections. We’ll format those with Heading</span>
<span class="f doc" style="left:320.09px;top:656.80px;letter-spacing:0.260px;font-size:18px;-webkit-text-stroke:.3px #000;">3. Using heading structure is preferable to <b>bolding</b> text, because it creates a structure in the</span>
<span class="f doc" style="left:320.22px;top:681.30px;letter-spacing:0.334px;font-size:18px;-webkit-text-stroke:.3px #000;">code of the document. Using <b>bold text</b> communicates importance or urgency but isn’t a good</span>
<span class="f doc" style="left:320.71px;top:705.90px;letter-spacing:0.457px;font-size:18px;-webkit-text-stroke:.3px #000;">tool for organizing your text.</span>
<span class="f doc" style="left:380.40px;top:737.30px;letter-spacing:0.818px;font-size:19.500px;color:#538135;-webkit-text-stroke:.25px #538135;">Sub-section of Section 2 [Heading 3]</span>
<span class="f doc" style="left:382.02px;top:763.90px;letter-spacing:0.256px;font-size:18px;-webkit-text-stroke:.3px #000;">This sub-section is nested under Section 2. It is not a main section of the document, but</span>
<span class="f doc" style="left:380.94px;top:788.60px;letter-spacing:0.272px;font-size:18px;-webkit-text-stroke:.3px #000;">it is a pleasant green color.</span>
<span class="f doc" style="left:319.61px;top:854.20px;letter-spacing:0.307px;font-size:24px;color:#4472c4;-webkit-text-stroke:.3px #4472c4;">Section 3 of the Document [Heading 2]</span>
<span class="f doc" style="left:320.71px;top:886.10px;letter-spacing:0.309px;font-size:18px;-webkit-text-stroke:.3px #000;">This is the last section of the document. Look at all that accessible formatting!</span>
<!-- status bar -->
<div class="a" style="left:0;top:1156.300px;width:1414px;height:34px;background:linear-gradient(#e9e9e9,#d0d0d0 22px);border-top:1px solid #a9a9a9"></div>
<div class="a" style="left:1050.800px;top:1157.300px;width:37.300px;height:22px;background:#9c9c9c"></div>
<span class="f" style="left:30.00px;top:1162.20px;letter-spacing:0.104px;font-size:12px;color:#3c3c3c;">Page 1 of 1</span>
<span class="f" style="left:111.94px;top:1162.20px;letter-spacing:0.288px;font-size:12px;color:#3c3c3c;">182 Words</span>
<span class="f" style="left:229.71px;top:1162.20px;letter-spacing:0.282px;font-size:12px;color:#3c3c3c;">English (US)</span>
<span class="f" style="left:1349.84px;top:1162.20px;letter-spacing:-0.027px;font-size:12px;color:#3c3c3c;">170%</span>
<svg class="a" style="left:0;top:1156px" width="1414" height="24" viewBox="0 1156 1414 24" fill="none">
 <!-- proofing book -->
 <path d="M198.300 1162.300q-1.200-.8-3.200-.8h-2.900v10.200h2.900q2 0 3.200 .9" stroke="#4a4a4a" stroke-width="1.100" stroke-linejoin="round"/>
 <path d="M198.300 1162.300V1174.200" stroke="#4a4a4a" stroke-width="1.100"/>
 <path d="M198.300 1162.300q1.200-.8 3.200-.8h3.400M198.300 1172.600q1.200-.9 3.200-.9h2.600" stroke="#4a4a4a" stroke-width="1.100"/>
 <path d="M201 1167.400l2.300 2.400l4-5.600" stroke="#4a4a4a" stroke-width="1.100"/>
 <!-- macro record -->
 <circle cx="322.400" cy="1162.700" r="2.300" fill="#333"/>
 <path d="M322.400 1162.100H332.600q1.800 0 1.800 2.200" stroke="#333" stroke-width="1.300"/>
 <path d="M330.900 1162.100V1172.200" stroke="#333" stroke-width="1.400"/>
 <path d="M321.300 1173H331.600" stroke="#333" stroke-width="2.300" stroke-linecap="round"/>
 <!-- print layout (selected) -->
 <rect x="1062.600" y="1161.800" width="12.600" height="11.200" rx=".8" stroke="#fff" stroke-width="1.300"/>
 <path d="M1064.400 1164h9M1064.400 1166.500h9M1064.400 1169h9M1064.400 1171.500h9" stroke="#fff" stroke-width="1.100" shape-rendering="crispEdges"/>
 <!-- web layout -->
 <path d="M1104.600 1171.600h-6.900v-9.600h10.500v4" stroke="#4c4c4c" stroke-width="1.300" stroke-linejoin="round"/>
 <path d="M1099.600 1164.200h6.800M1099.600 1166.500h6.800M1099.600 1168.800h4.200" stroke="#4c4c4c" stroke-width="1"/>
 <circle cx="1108.500" cy="1170.300" r="4.400" fill="#4a4a4a" stroke="#dcdcdc" stroke-width=".6"/>
 <path d="M1105.600 1169q1.400-1.800 2.800-.8q.6 1.200-.6 2.200q-.8 1.600-.2 2.600M1109.600 1167q1.800 .8 2 2.600q-1.400 1.200-1.200 3" stroke="#cfcfcf" stroke-width="1"/>
 <!-- outline -->
 <path d="M1134 1163.300h2M1137.600 1163.300h7M1138 1166.100h2M1141.600 1166.100h7.400M1138 1169.300h2M1141.600 1169.300h7.400M1135.800 1172.400h1.800M1139.200 1172.400h7.600" stroke="#4c4c4c" stroke-width="1.100"/>
 <!-- draft -->
 <path d="M1169.800 1163.300h13.900M1169.800 1166.100h10.900M1169.800 1169.300h13.200M1169.800 1172.400h10.900" stroke="#4c4c4c" stroke-width="1.100"/>
 <!-- zoom slider -->
 <path d="M1203 1168h8.200" stroke="#3c3c3c" stroke-width="1.900"/>
 <path d="M1219.500 1168h97.300" stroke="#9c9c9c" stroke-width="3.200" stroke-linecap="round"/>
 <circle cx="1276.200" cy="1168" r="6.200" fill="#fff" stroke="#6e6e6e" stroke-width="1"/>
 <path d="M1325.200 1168h8M1329.200 1164v8" stroke="#3c3c3c" stroke-width="1.900"/>
</svg>
</div>
</body>
</html>
